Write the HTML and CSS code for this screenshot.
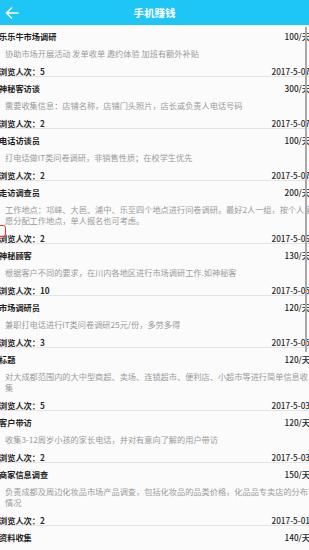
FILE: index.html
```html
<!DOCTYPE html>
<html lang="zh">
<head>
<meta charset="utf-8">
<title>手机赚钱</title>
<link rel="stylesheet" href="styles.css">
</head>
<body>
<header class="topbar">
  <svg class="back" width="14" height="12" viewBox="0 0 14 12"><path d="M13 6H1.5M6.5 1L1.5 6l5 5" fill="none" stroke="#fff" stroke-width="1.5" stroke-linecap="round" stroke-linejoin="round"/></svg>
  <h1 class="title">手机赚钱</h1>
</header>
<main class="list">
  <div class="item">
    <div class="row head"><span class="name">乐乐牛市场调研</span><span class="pay">100/天</span></div>
    <p class="desc">协助市场开展活动 发单收单 邀约体验 加班有额外补贴</p>
    <div class="row foot"><span>浏览人次：5</span><span>2017-5-07</span></div>
  </div>
  <div class="item">
    <div class="row head"><span class="name">神秘客访谈</span><span class="pay">300/天</span></div>
    <p class="desc">需要收集信息：店铺名称，店铺门头照片，店长或负责人电话号码</p>
    <div class="row foot"><span>浏览人次：2</span><span>2017-5-07</span></div>
  </div>
  <div class="item">
    <div class="row head"><span class="name">电话访谈员</span><span class="pay">100/天</span></div>
    <p class="desc">打电话做IT类问卷调研，非销售性质；在校学生优先</p>
    <div class="row foot"><span>浏览人次：2</span><span>2017-5-07</span></div>
  </div>
  <div class="item">
    <div class="row head"><span class="name">走访调查员</span><span class="pay">200/天</span></div>
    <p class="desc">工作地点：邛崃、大邑、浦中、乐至四个地点进行问卷调研。最好2人一组，按个人意<br>愿分配工作地点，单人报名也可考虑。</p>
    <div class="row foot"><span>浏览人次：2</span><span>2017-5-06</span></div>
  </div>
  <div class="item">
    <div class="row head"><span class="name">神秘顾客</span><span class="pay">130/天</span></div>
    <p class="desc">根据客户不同的要求，在川内各地区进行市场调研工作.如神秘客</p>
    <div class="row foot"><span>浏览人次：10</span><span>2017-5-05</span></div>
  </div>
  <div class="item">
    <div class="row head"><span class="name">市场调研员</span><span class="pay">120/天</span></div>
    <p class="desc">兼职打电话进行IT类问卷调研25元/份，多劳多得</p>
    <div class="row foot"><span>浏览人次：3</span><span>2017-5-05</span></div>
  </div>
  <div class="item">
    <div class="row head"><span class="name">标题</span><span class="pay">120/天</span></div>
    <p class="desc">对大成都范围内的大中型商超、卖场、连锁超市、便利店、小超市等进行简单信息收<br>集</p>
    <div class="row foot"><span>浏览人次：5</span><span>2017-5-03</span></div>
  </div>
  <div class="item">
    <div class="row head"><span class="name">客户带访</span><span class="pay">120/天</span></div>
    <p class="desc">收集3-12周岁小孩的家长电话，并对有意向了解的用户带访</p>
    <div class="row foot"><span>浏览人次：2</span><span>2017-5-03</span></div>
  </div>
  <div class="item">
    <div class="row head"><span class="name">商家信息调查</span><span class="pay">150/天</span></div>
    <p class="desc">负责成都及周边化妆品市场产品调查，包括化妆品的品类价格，化品品专卖店的分布<br>情况</p>
    <div class="row foot"><span>浏览人次：2</span><span>2017-5-01</span></div>
  </div>
  <div class="item">
    <div class="row head"><span class="name">资料收集</span><span class="pay">140/天</span></div>
    <p class="desc">主要从事几个区域的调研收集，包括成都锦江区、金牛区、成华区、武侯区和高新区日常</p>
    <div class="row foot"><span>浏览人次：1</span><span>2017-5-01</span></div>
  </div>
</main>
<div class="scrollbar"></div>
<div class="float-mark"></div>
</body>
</html>
```

FILE: styles.css
```css
html, body {
  margin: 0;
  padding: 0;
}
body {
  width: 309px;
  height: 550px;
  overflow: hidden;
  background: #fbfbfb;
  font-family: "Noto Sans CJK SC", "Noto Sans", Roboto, sans-serif;
  color: #222;
}
.topbar {
  height: 25px;
  background: #1dc6f4;
  display: flex;
  align-items: center;
  justify-content: center;
  position: relative;
}
.back {
  position: absolute;
  left: 5px;
  top: 7px;
}
.title {
  margin: 0;
  font-size: 10.5px;
  font-weight: 700;
  color: #fff;
  line-height: 25px;
}
.list {
  margin-left: -1px;
  width: 311px;
}
.item {
  border-bottom: 1px solid #e4e4e4;
}
.row {
  display: flex;
  justify-content: space-between;
  align-items: center;
  font-size: 8.2px;
}
.head {
  height: 22px;
  font-weight: 700;
  color: #1e1e1e;
}
.pay {
  font-weight: 500;
  color: #222;
}
.desc {
  margin: 0 -12px 0 0;
  padding: 1px 0 6px 6px;
  font-size: 8.2px;
  line-height: 11px;
  color: #9a9a9a;
  white-space: nowrap;
}
.foot {
  height: 11px;
  font-weight: 700;
  color: #2a2a2a;
}
.foot span:last-child {
  font-weight: 500;
}
.scrollbar {
  position: absolute;
  left: 305px;
  top: 27px;
  width: 2px;
  height: 325px;
  background: #a8a8a8;
}
.float-mark {
  position: absolute;
  left: -4px;
  top: 225px;
  width: 8px;
  height: 10px;
  border: 1.5px solid #e33;
  border-radius: 3px;
  background: rgba(255, 255, 255, 0.6);
}
```
